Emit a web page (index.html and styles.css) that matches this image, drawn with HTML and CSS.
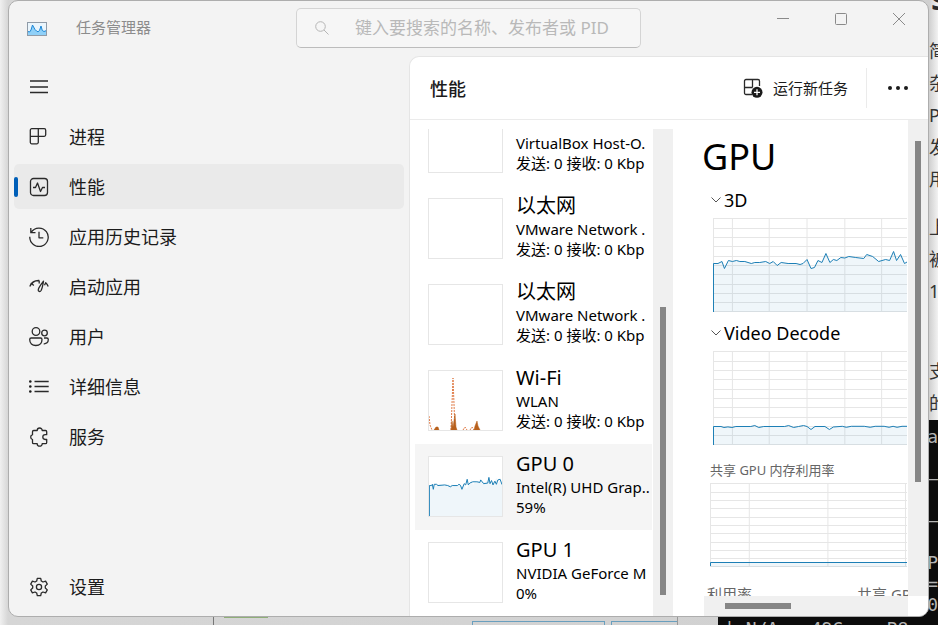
FILE: index.html
```html
<!DOCTYPE html>
<html lang="zh-CN">
<head>
<meta charset="utf-8">
<meta name="viewport" content="width=device-width, initial-scale=1">
<title>任务管理器</title>
<link rel="stylesheet" href="styles.css">
</head>
<body>
<div class="desktop" aria-hidden="true">
  <div class="behind-strip"></div>
  <div class="article">
    <p>简</p><p>杂</p><p>P</p><p>发</p><p>用</p>
    <p class="para">上</p><p>被</p><p>1</p>
    <p class="para-wide">支</p><p>的</p>
  </div>
  <div class="behind-heading">s</div>
  <div class="taskpane">
    <span class="pane-side"></span>
    <span class="pane-chart"></span>
    <span class="pane-chart"></span>
  </div>
  <div class="green-mark"></div>
  <div class="terminal">
    <pre class="term-edge">a

—

—

P
=
0</pre>
    <pre class="term-line">| N/A   49C    P8</pre>
  </div>
</div>

<div class="window">
  <header class="titlebar">
    <svg class="app-icon" viewBox="0 0 20 14">
      <rect x=".5" y=".5" width="19" height="13" fill="#eaf5fc" stroke="#8f9ba8"/>
      <path d="M1 9.500l1.500.5L4 8l1.500-5L8 7.500 9.500 9l1.500.8L12.500 8.500 14 4l1.300 4.500L17 9.500l2-.8V13H1z" fill="#8fd0f8"/>
      <path d="M1 9.500l1.500.5L4 8l1.500-5L8 7.500 9.500 9l1.500.8L12.500 8.500 14 4l1.300 4.500L17 9.500l2-.8" fill="none" stroke="#1b86d6"/>
    </svg>
    <h1 class="app-name">任务管理器</h1>
    <label class="search">
      <svg viewBox="0 0 14 14" class="search-icon"><circle cx="5.500" cy="5.500" r="4.800"/><path d="M9 9l4.500 4.500"/></svg>
      <input type="search" aria-label="搜索" placeholder="键入要搜索的名称、发布者或 PID">
    </label>
    <div class="caption">
      <button type="button" aria-label="最小化"><svg viewBox="0 0 12 12"><path d="M0 5.500h12"/></svg></button>
      <button type="button" aria-label="最大化"><svg viewBox="0 0 12 12"><rect x=".5" y=".5" width="11" height="11" rx="1"/></svg></button>
      <button type="button" aria-label="关闭"><svg viewBox="0 0 12 12"><path d="M0 0l12 12M12 0L0 12"/></svg></button>
    </div>
  </header>

  <div class="body">
    <nav class="nav">
      <button type="button" class="nav-item" aria-label="导航">
        <svg class="icon" viewBox="0 0 20 20"><path d="M1 4h18M1 10h18M1 15.500h18"/></svg>
      </button>
      <button type="button" class="nav-item">
        <svg class="icon" viewBox="0 0 20 20"><path d="M2.800 1.700h12.400a1.500 1.500 0 0 1 1.500 1.500v4.600a1.500 1.500 0 0 1-1.500 1.500H1.300M9.300 1.700v13.600a1.500 1.500 0 0 1-1.500 1.500h-5a1.500 1.500 0 0 1-1.500-1.500V3.200a1.500 1.500 0 0 1 1.500-1.500"/></svg>
        <span>进程</span>
      </button>
      <button type="button" class="nav-item selected" aria-current="page">
        <svg class="icon" viewBox="0 0 20 20"><rect x="1.500" y="1.500" width="17" height="17" rx="3"/><path d="M4 10.500h2.500L8.500 6l3 8.500 2-4h2.500"/></svg>
        <span>性能</span>
      </button>
      <button type="button" class="nav-item">
        <svg class="icon" viewBox="0 0 20 20"><path d="M2.300 5.200A9.200 9.200 0 1 1 .8 9.800M1.800 1v4.700h4.700M10 4.800v6h4.300"/></svg>
        <span>应用历史记录</span>
      </button>
      <button type="button" class="nav-item">
        <svg class="icon" viewBox="0 0 20 20"><path d="M.8 9.500C2.500 5.500 6 3.300 10.200 3.500M.8 9.500l1.500-3.200 2.500 2.300M10.200 3.500v3M19.200 9.500c-.6-1.500-1.400-2.700-2.500-3.700l-1.200 2.500M14.500 4.200c-2.300 3-4.600 6-5.200 8.300-.5 2 1.700 2.800 2.800 1C13.200 11.500 14 7.500 14.500 4.200z"/></svg>
        <span>启动应用</span>
      </button>
      <button type="button" class="nav-item">
        <svg class="icon" viewBox="0 0 20 20"><circle cx="7" cy="4.500" r="3.800"/><circle cx="15.500" cy="6" r="2.800"/><path d="M2.200 11h9.300a1.500 1.500 0 0 1 1.500 1.500c0 4-2.600 6-6.200 6s-6.100-2-6.100-6A1.500 1.500 0 0 1 2.200 11zM15 11h2.800a1.500 1.500 0 0 1 1.500 1.500c0 3-1.900 4.500-4.600 4.300"/></svg>
        <span>用户</span>
      </button>
      <button type="button" class="nav-item">
        <svg class="icon" viewBox="0 0 20 20"><path d="M5.500 4.500h14.200M5.500 9.500h14.200M5.500 14.500h14.200"/><g class="solid"><circle cx="1.300" cy="4.500" r="1.300"/><circle cx="1.300" cy="9.500" r="1.300"/><circle cx="1.300" cy="14.500" r="1.300"/></g></svg>
        <span>详细信息</span>
      </button>
      <button type="button" class="nav-item">
        <svg class="icon" viewBox="0 0 20 20"><path d="M4.700 3.500h3.500a2.500 2.500 0 0 1 5 0h3.300a1.200 1.200 0 0 1 1.200 1.200v3h-1.500a2.400 2.400 0 0 0 0 4.800h1.500v3a1.200 1.200 0 0 1-1.200 1.200h-3.300a2.500 2.500 0 0 1-5 0H4.700a1.200 1.200 0 0 1-1.200-1.200v-3a2.500 2.500 0 0 1 0-4.800v-3a1.200 1.200 0 0 1 1.200-1.200z"/></svg>
        <span>服务</span>
      </button>
      <button type="button" class="nav-item settings">
        <svg class="icon" viewBox="0 0 20 20"><circle cx="10" cy="10" r="2.600"/><path d="M8.300 1.400h3.400l.6 2.600 1.700 1 2.600-.8 1.700 2.900-2 1.900v2l2 1.900-1.700 2.900-2.600-.8-1.700 1-.6 2.600H8.300L7.700 16 6 15l-2.600.8-1.700-2.900 2-1.900V9l-2-1.900 1.700-2.900L6 5l1.700-1z"/></svg>
        <span>设置</span>
      </button>
    </nav>

    <main class="panel">
      <div class="commands">
        <h2>性能</h2>
        <button type="button" class="run-task">
          <svg viewBox="0 0 20 20" class="icon"><path d="M9 16.500H3a1.500 1.500 0 0 1-1.500-1.500V3A1.500 1.500 0 0 1 3 1.500h12A1.500 1.500 0 0 1 16.500 3v5M1.500 9.500h8M9.500 1.500v8"/><circle class="solid" cx="14" cy="14.300" r="5.500"/><path class="plus" d="M14 11.300v6M11 14.300h6"/></svg>
          <span>运行新任务</span>
        </button>
        <button type="button" class="more" aria-label="更多"><svg viewBox="0 0 20 4"><circle cx="2" cy="2" r="2"/><circle cx="10" cy="2" r="2"/><circle cx="18" cy="2" r="2"/></svg></button>
      </div>

      <div class="content">
        <div class="resources">
          <ul class="resource-list">
            <li><button type="button" class="resource"><span class="thumb"></span><span class="info"><b>以太网</b><span>VirtualBox Host-O.</span><span>发送: 0 接收: 0 Kbp</span></span></button></li>
            <li><button type="button" class="resource"><span class="thumb"></span><span class="info"><b>以太网</b><span>VMware Network .</span><span>发送: 0 接收: 0 Kbp</span></span></button></li>
            <li><button type="button" class="resource"><span class="thumb"></span><span class="info"><b>以太网</b><span>VMware Network .</span><span>发送: 0 接收: 0 Kbp</span></span></button></li>
            <li><button type="button" class="resource"><span class="thumb"><svg viewBox="0 0 73 59">
              <path class="wifi-dash" d="M0 45l1 9 2 5M22 59L24 7l2 52M34 59l2-3 2 3M41 59l2-3 2 3"/>
              <path class="wifi" d="M5 59l2-3 2 0 1 3zM22 59l1-9 1 6 2-13 1 13 1 3zM45 59l1-4 2-5 1 5 2 4z"/></svg></span>
              <span class="info"><b>Wi-Fi</b><span>WLAN</span><span>发送: 0 接收: 0 Kbp</span></span></button></li>
            <li><button type="button" class="resource active"><span class="thumb"><svg viewBox="0 0 195 94" preserveAspectRatio="none">
              <path class="area" d="M0 94V45.500L5 45.500 9 43.500 11.500 50.500 15.500 42.500 19.500 43.500 32 43.500 38.500 45.500 53 43.500 57 45.500 60.500 43.500 64.500 47.500 68.500 44.500 87.500 46.500 94.500 41.500 98.500 50.500 102 49.500 105.500 42.500 109.500 44.500 113.500 35.500 117.500 44.500 121 41.500 136.500 38.500 151.500 40.500 154.500 36.500 166.500 43.500 181.500 33.500 184.500 42.500 188.500 36.500 192.500 45.500 195 44V94z"/>
              <path class="line" d="M1 94V45.500H7L9 43.500 11.500 51.500 14 43.500H20L24 45.500 42 44.500 50 45.500 57 47.500 62 45.500 76 45.500 80 43.500 84 45 88 51.500 94 42.500 98 44.500 102 35.500 105 44.500 109 41.500 117 39.500 128 39.500 136 40.500 138 36.500 146 42.500 157 41.500 160 32.500 163 42.500 167 37.500 171 44.500 176 38.500 180 43.500 184 36.500 190 35.500 195 44"/></svg></span>
              <span class="info"><b>GPU 0</b><span>Intel(R) UHD Grap..</span><span>59%</span></span></button></li>
            <li><button type="button" class="resource"><span class="thumb"></span><span class="info"><b>GPU 1</b><span>NVIDIA GeForce M</span><span>0%</span></span></button></li>
          </ul>
          <div class="track list-track"><div class="grip"></div></div>
        </div>

        <div class="detail">
          <div class="detail-view">
            <h3>GPU</h3>
            <button type="button" class="engine"><svg viewBox="0 0 10 6"><path d="M.5.5L5 5 9.500.5"/></svg>3D</button>
            <svg class="plot" viewBox="0 0 195 94" preserveAspectRatio="none">
              <path class="grid" d="M0 .5h195M0 10.500h195M0 19.500h195M0 28.500h195M0 38.500h195M0 47.500h195M0 56.500h195M0 66.500h195M0 75.500h195M0 84.500h195M0 93.500h195M.5 0v94M19.500 0v94M56.500 0v94M94.500 0v94M132.500 0v94M169.500 0v94"/>
              <path class="area" d="M0 94V45.500L5 45.500 9 43.500 11.500 50.500 15.500 42.500 19.500 43.500 23.500 42.500 27 43.500 32 43.500 38.500 45.500 42 44.500 47 44.500 53 43.500 57 45.500 60.500 43.500 64.500 47.500 68.500 44.500 75.500 45.500 83.500 45.500 87.500 46.500 90.500 45.500 94.500 41.500 98.500 50.500 102 49.500 105.500 42.500 109.500 44.500 113.500 35.500 117.500 44.500 121 41.500 124.500 42.500 128.500 39.500 132.500 40 136.500 38.500 143.500 39.500 151.500 40.500 154.500 36.500 160.500 38.500 166.500 43.500 173.500 41.500 177.500 42.500 181.500 33.500 184.500 42.500 188.500 36.500 192.500 45.500 195 44V94z"/>
              <path class="line" d="M.5 94V45.500L5 45.500 9 43.500 11.500 50.500 15.500 42.500 19.500 43.500 23.500 42.500 27 43.500 32 43.500 38.500 45.500 42 44.500 47 44.500 53 43.500 57 45.500 60.500 43.500 64.500 47.500 68.500 44.500 75.500 45.500 83.500 45.500 87.500 46.500 90.500 45.500 94.500 41.500 98.500 50.500 102 49.500 105.500 42.500 109.500 44.500 113.500 35.500 117.500 44.500 121 41.500 124.500 42.500 128.500 39.500 132.500 40 136.500 38.500 143.500 39.500 151.500 40.500 154.500 36.500 160.500 38.500 166.500 43.500 173.500 41.500 177.500 42.500 181.500 33.500 184.500 42.500 188.500 36.500 192.500 45.500 195 44"/>
            </svg>
            <button type="button" class="engine"><svg viewBox="0 0 10 6"><path d="M.5.5L5 5 9.500.5"/></svg>Video Decode</button>
            <svg class="plot" viewBox="0 0 195 94" preserveAspectRatio="none">
              <path class="grid" d="M0 .5h195M0 10.500h195M0 19.500h195M0 28.500h195M0 38.500h195M0 47.500h195M0 56.500h195M0 66.500h195M0 75.500h195M0 84.500h195M0 93.500h195M.5 0v94M19.500 0v94M56.500 0v94M94.500 0v94M132.500 0v94M169.500 0v94"/>
              <path class="area" d="M0 94V75.500h90l8 3 4-3h10l5 3 4-3h74V94z"/>
              <path class="line" d="M.5 94V75.500H8l3 1 4-.6 4 .6 4-1h15l4-1 4 2 5-1h21l4-1 5 2 5-1 5-1 3.500 1 4 3 4-3h10l4.500 3 4-2.500 9-.7 4 1 5-1h13l6 1 5-1h9l5 1 4-1 4 1 5-1h5"/>
            </svg>
            <p class="caption-small">共享 GPU 内存利用率</p>
            <svg class="plot memory" viewBox="0 0 198 84" preserveAspectRatio="none">
              <path class="grid" d="M0 .5h198M0 9.500h198M0 17.500h198M0 25.500h198M0 34.500h198M0 42.500h198M0 50.500h198M0 59.500h198M0 67.500h198M0 75.500h198M0 83.500h198M.5 0v84M39.500 0v84M118.500 0v84M196.500 0v84"/>
              <path class="area" d="M0 84v-4.500h198V84z"/>
              <path class="line" d="M.5 83v-3.500H198"/>
            </svg>
            <div class="stats"><span>利用率</span><span>共享 GPU</span></div>
          </div>
          <div class="track detail-track"><div class="grip"></div></div>
          <div class="htrack"><div class="grip"></div></div>
        </div>
      </div>
    </main>
  </div>
</div>
</body>
</html>
```
FILE: styles.css
```css
* { box-sizing: border-box; }

html, body { margin: 0; height: 100%; }

body {
  position: relative;
  overflow: hidden;
  padding: 0 9px 8px 8px;
  background: #d2d2d2;
  color: #1b1b1b;
  font: 15px/20px "Noto Sans", "Noto Sans CJK SC", sans-serif;
}

h1, h2, h3, p, ul, pre { margin: 0; padding: 0; font-weight: 400; }
ul { list-style: none; }
button {
  border: 0;
  padding: 0;
  background: none;
  color: inherit;
  font: inherit;
  text-align: left;
}
svg { display: block; flex: none; }

/* Windows lying behind the task manager */
.desktop {
  position: absolute;
  inset: 0;
  overflow: hidden;
  background: linear-gradient(to right, #f0f0f0 0, #d6d6d6 8px, #d0d0d0 100%);
}
.behind-strip {
  position: absolute;
  top: 0;
  left: 199px;
  width: 480px;
  height: 2px;
  background: #332f33;
}
.behind-heading {
  position: absolute;
  top: -18px;
  right: -9px;
  color: #2a2a2a;
  font: 700 32px/32px "Noto Sans", sans-serif;
}
.article {
  position: absolute;
  top: 0;
  right: 0;
  width: 9px;
  height: 420px;
  padding-top: 35px;
  overflow: hidden;
  background: linear-gradient(to right, #cfcfcf, #f2f2f2);
  color: #333;
  font-size: 18px;
  line-height: 32px;
  white-space: nowrap;
}
.article .para { margin-top: 16px; }
.article .para-wide { margin-top: 48px; }
.terminal {
  position: absolute;
  top: 420px;
  right: 0;
  bottom: 0;
  width: 220px;
  background: #0c0c0c;
  color: #b4b4b4;
}
.terminal pre { font: 18px/21px "DejaVu Sans Mono", monospace; }
.term-edge { position: absolute; top: 6px; right: 0; }
.term-line { position: absolute; left: 6px; top: 198px; }
.taskpane {
  position: absolute;
  left: 213px;
  bottom: 0;
  width: 465px;
  height: 8px;
  display: flex;
  gap: 6px;
  padding-top: 4px;
  border-left: 1px solid #777;
  border-right: 1px solid #999;
}
.pane-side { flex: 0 0 252px; }
.pane-chart { flex: 2; border: 1px solid #6a9fbe; border-bottom: 0; }
.pane-chart:last-child { flex: 1; border-right: 0; }
.green-mark {
  position: absolute;
  left: 224px;
  bottom: 7px;
  width: 44px;
  height: 2px;
  background: #8fae78;
}

/* Window frame */
.window {
  position: relative;
  display: flex;
  flex-direction: column;
  height: 100%;
  overflow: hidden;
  border: 1px solid #adadad;
  border-radius: 10px;
  background: #f3f3f3;
}
.titlebar {
  display: flex;
  flex: none;
  align-items: flex-start;
  height: 55px;
  padding-left: 18px;
}
.app-icon { width: 20px; height: 14px; margin-top: 21px; }
.app-name {
  width: 220px;
  margin: 16px 0 0 29px;
  color: #8c8c8c;
  font-size: 15px;
  line-height: 20px;
}
.search {
  display: flex;
  align-items: center;
  width: 345px;
  height: 40px;
  margin-top: 7px;
  padding-left: 18px;
  border: 1px solid #d4d4d4;
  border-bottom-color: #bcbcbc;
  border-radius: 5px;
  background: #f6f6f6;
}
.search-icon {
  width: 14px;
  height: 14px;
  fill: none;
  stroke: #b5b5b5;
}
.search input {
  flex: 1;
  min-width: 0;
  margin-left: 26px;
  padding: 0;
  border: 0;
  outline: 0;
  background: none;
  font: inherit;
  font-size: 17px;
}
.search input::placeholder { color: #b9b9b9; opacity: 1; }
.caption { display: flex; margin-left: auto; }
.caption button {
  display: grid;
  place-items: center;
  width: 58px;
  height: 36px;
}
.caption svg {
  width: 12px;
  height: 12px;
  fill: none;
  stroke: #8a8a8a;
}

.body { display: flex; flex: 1; min-height: 0; }

/* Navigation */
.nav {
  display: flex;
  flex: 0 0 400px;
  flex-direction: column;
  gap: 5px;
  padding: 8px 5px 7px;
}
.nav-item {
  display: flex;
  align-items: center;
  gap: 20px;
  height: 45px;
  padding-left: 15px;
  border-radius: 5px;
  font-size: 18px;
  line-height: 24px;
}
.icon {
  width: 20px;
  height: 20px;
  fill: none;
  stroke: #2a2a2a;
  stroke-width: 1.3;
  stroke-linejoin: round;
}
.solid { fill: #1b1b1b; stroke: none; }
.plus { stroke: #fff; }
.selected { background: #eaeaea; }
.selected::before {
  content: "";
  width: 4px;
  height: 20px;
  margin: 0 -9px 0 -15px;
  border-radius: 2px;
  background: #005fb8;
}
.settings { margin-top: auto; }

/* Main panel */
.panel {
  display: flex;
  flex: 1;
  flex-direction: column;
  min-width: 0;
  border: 1px solid #e5e5e5;
  border-width: 1px 0 0 1px;
  border-top-left-radius: 10px;
  background: #fff;
}
.commands {
  display: flex;
  flex: none;
  align-items: center;
  height: 63px;
  padding: 0 20px;
  border-bottom: 1px solid #ebebeb;
}
.commands h2 { margin-right: auto; padding-top: 2px; font-size: 18px; font-weight: 500; line-height: 24px; }
.run-task {
  display: flex;
  align-items: center;
  gap: 10px;
  height: 40px;
  padding-right: 18px;
  border-right: 1px solid #ebebeb;
}
.more { padding-left: 21px; }
.more svg { width: 20px; height: 4px; fill: #1b1b1b; }

.content { display: flex; flex: 1; min-height: 0; color: #000; }

.track {
  flex: none;
  width: 20px;
  background: #f0f0f0;
}
.grip { background: #868686; }
.track .grip { width: 6px; margin-left: 7px; }

.resources {
  display: flex;
  flex: 0 0 263px;
  padding: 9px 0 0 5px;
}
.resource-list {
  display: flex;
  flex: 0 0 237px;
  flex-direction: column;
  justify-content: flex-end;
  overflow: hidden;
  margin-right: 1px;
}
.resource {
  display: flex;
  gap: 13px;
  width: 100%;
  height: 86px;
  padding: 12px 0 0 13px;
  overflow: hidden;
  white-space: nowrap;
}
.active { background: #f5f5f5; }
.thumb {
  flex: none;
  width: 75px;
  height: 61px;
  border: 1px solid #e6e6e6;
  background: #fff;
}
.thumb svg { width: 73px; height: 59px; }
.info { display: flex; flex-direction: column; margin-top: -6px; }
.info b { font-size: 20px; font-weight: 400; line-height: 27px; }
.list-track { padding-top: 178px; padding-bottom: 21px; }
.list-track .grip { height: 100%; }

.area { fill: #1c7fb6; fill-opacity: .07; }
.line { fill: none; stroke: #1c7fb6; vector-effect: non-scaling-stroke; }
.grid { fill: none; stroke: #e6e6e6; vector-effect: non-scaling-stroke; }
.wifi { fill: #b8601c; stroke: #b8601c; stroke-width: .5; }
.wifi-dash { fill: none; stroke: #e07a45; stroke-dasharray: 2 1; }

/* Detail pane */
.detail {
  display: grid;
  flex: 1;
  grid-template: minmax(0, 1fr) 20px / minmax(0, 1fr) 20px;
  min-width: 0;
}
.detail-view {
  overflow: hidden;
  padding: 14px 1px 0 29px;
}
.detail-view h3 { font-size: 36px; line-height: 45px; }
.engine {
  display: flex;
  align-items: center;
  gap: 3px;
  height: 28px;
  margin: 7px 0 4px 9px;
  font-size: 18px;
  line-height: 24px;
}
.engine svg { width: 10px; height: 6px; fill: none; stroke: #555; }
.plot { width: calc(100% - 11px); height: 94px; margin-left: 11px; }
.memory { width: calc(100% - 8px); height: 84px; margin-left: 8px; }
.caption-small { margin: 15px 0 3px 8px; color: #666; font-size: 13px; }
.stats {
  display: grid;
  grid-template-columns: 150px auto;
  margin: 17px 0 0 5px;
  color: #666;
  white-space: nowrap;
}
.detail-track { padding-top: 21px; }
.detail-track .grip { height: 75%; }
.htrack {
  margin-left: 31px;
  padding: 7px 0 7px 21px;
  background: #f0f0f0;
}
.htrack .grip { width: 66px; height: 6px; }
```
